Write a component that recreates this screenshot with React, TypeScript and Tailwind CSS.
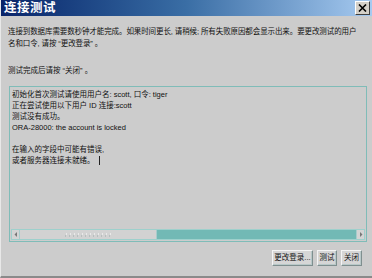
import React from "react";

const font = { fontFamily: '"Liberation Sans", "Noto Sans CJK SC", sans-serif' };

function Btn({ children, w }: { children: React.ReactNode; w: string }) {
  return (
    <div
      className={`${w} h-[16px] flex items-center justify-center text-[7.5px] leading-none text-[#111] bg-[#d6d6d6] border border-t-[#f4f4f4] border-l-[#f4f4f4] border-r-[#7f8f8f] border-b-[#7f8f8f] shadow-[inset_-1px_-1px_0_#b8c8c8]`}
    >
      {children}
    </div>
  );
}

export default function App() {
  return (
    <div
      className="w-[372px] h-[278px] bg-[#cccccc] flex flex-col border-l border-l-[#e8e8e8] border-b-2 border-b-[#8a8a8a] overflow-hidden"
      style={font}
    >
      <div className="h-[16px] shrink-0 flex items-center justify-between bg-gradient-to-r from-[#0a246a] via-[#3a6ea5] to-[#a6caf0] pl-[3px] pr-[2px]">
        <span className="text-white font-bold text-[12.5px] leading-none tracking-[0.5px]">连接测试</span>
        <div className="w-[15px] h-[14px] bg-[#d4d0c8] border border-t-white border-l-white border-r-[#404040] border-b-[#404040] flex items-center justify-center">
          <svg width="9" height="8" viewBox="0 0 9 8">
            <path d="M1 0.5 L8 7.5 M8 0.5 L1 7.5" stroke="#000" strokeWidth="1.6" />
          </svg>
        </div>
      </div>

      <div className="flex-1 flex flex-col pl-[7px] pr-[6px]">
        <div className="mt-[10px] text-[7.5px] leading-[12px] text-[#111] tracking-[-0.1px]">
          <div className="whitespace-nowrap">连接到数据库需要数秒钟才能完成。如果时间更长, 请稍候; 所有失败原因都会显示出来。要更改测试的用户</div>
          <div className="whitespace-nowrap">名和口令, 请按 “更改登录” 。</div>
        </div>
        <div className="mt-[15px] text-[7.5px] leading-[12px] text-[#111]">测试完成后请按 “关闭” 。</div>

        <div className="mt-[9px] ml-[1px] w-[358px] h-[156px] border border-[#7fbcb8] bg-[#cccccc] flex flex-col">
          <div className="flex-1 pl-[2px] pt-[2px] text-[7.5px] leading-[11px] text-[#111]">
            <div>初始化首次测试请使用用户名: scott, 口令: tiger</div>
            <div>正在尝试使用以下用户 ID 连接:scott</div>
            <div>测试没有成功。</div>
            <div>ORA-28000: the account is locked</div>
            <div className="h-[11px]" />
            <div>在输入的字段中可能有错误,</div>
            <div className="flex items-center">
              或者服务器连接未就绪。
              <span className="ml-[4px] inline-block w-px h-[9px] bg-[#222]" />
            </div>
          </div>
          <div className="h-[11px] mx-[1px] mb-[1px] flex border border-[#9ed0cc] bg-[#d8d8d8]">
            <div className="w-[8px] h-full flex items-center justify-center bg-[#d4d4d4] border-r border-[#a8cccc]">
              <svg width="4" height="5" viewBox="0 0 4 5"><path d="M3 0 L0.5 2.5 L3 5Z" fill="#777" /></svg>
            </div>
            <div className="w-[137px] h-full bg-[#d2d2d2] border-r border-[#a8cccc] flex items-center justify-center">
              <svg width="46" height="4" viewBox="0 0 46 4">
                {Array.from({ length: 12 }).map((_, i) => (
                  <g key={i}>
                    <rect x={1 + i * 4} y={0.5} width="1" height="1" fill="#ffffff" />
                    <rect x={i * 4} y={2.5} width="1" height="1" fill="#9aa" />
                  </g>
                ))}
              </svg>
            </div>
            <div className="flex-1 h-full bg-[#72b9b5]" />
            <div className="w-[8px] h-full flex items-center justify-center bg-[#d4d4d4] border-l border-[#a8cccc]">
              <svg width="4" height="5" viewBox="0 0 4 5"><path d="M1 0 L3.5 2.5 L1 5Z" fill="#777" /></svg>
            </div>
          </div>
        </div>

        <div className="mt-[8px] flex justify-end gap-[4px] pr-[4px]">
          <Btn w="w-[41px]">更改登录...</Btn>
          <Btn w="w-[20px]">测试</Btn>
          <Btn w="w-[21px]">关闭</Btn>
        </div>
      </div>
    </div>
  );
}
